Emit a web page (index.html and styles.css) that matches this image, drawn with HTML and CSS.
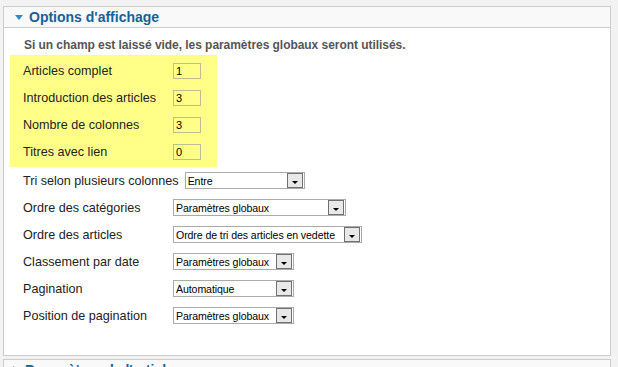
FILE: index.html
```html
<!DOCTYPE html>
<html lang="fr">
<head>
<meta charset="utf-8">
<link rel="stylesheet" href="styles.css">
</head>
<body>
<div class="panel">
  <div class="panel-head"><span class="tri-down"></span><span class="panel-title">Options d'affichage</span></div>
  <div class="panel-body">
    <p class="desc">Si un champ est laissé vide, les paramètres globaux seront utilisés.</p>
    <div class="highlight">
      <div class="row"><label class="lbl">Articles complet</label><span class="inp">1</span></div>
      <div class="row"><label class="lbl">Introduction des articles</label><span class="inp">3</span></div>
      <div class="row"><label class="lbl">Nombre de colonnes</label><span class="inp">3</span></div>
      <div class="row"><label class="lbl">Titres avec lien</label><span class="inp">0</span></div>
    </div>
    <div class="rows">
      <div class="row"><label class="lbl">Tri selon plusieurs colonnes</label><span class="sel w118"><span class="sel-text">Entre</span><span class="sel-btn"></span></span></div>
      <div class="row"><label class="lbl">Ordre des catégories</label><span class="sel w171"><span class="sel-text">Paramètres globaux</span><span class="sel-btn"></span></span></div>
      <div class="row"><label class="lbl">Ordre des articles</label><span class="sel w187"><span class="sel-text">Ordre de tri des articles en vedette</span><span class="sel-btn"></span></span></div>
      <div class="row"><label class="lbl">Classement par date</label><span class="sel w119"><span class="sel-text">Paramètres globaux</span><span class="sel-btn"></span></span></div>
      <div class="row"><label class="lbl">Pagination</label><span class="sel w119"><span class="sel-text">Automatique</span><span class="sel-btn"></span></span></div>
      <div class="row"><label class="lbl">Position de pagination</label><span class="sel w119"><span class="sel-text">Paramètres globaux</span><span class="sel-btn"></span></span></div>
    </div>
  </div>
</div>
<div class="panel panel-closed">
  <div class="panel-head"><span class="tri-right"></span><span class="panel-title">Paramètres de l'article</span></div>
</div>
</body>
</html>
```
FILE: styles.css
```css
html, body {
  margin: 0;
  padding: 0;
}
body {
  background: #f2f2f2;
  font-family: "Liberation Sans", Arial, sans-serif;
  padding: 6px 0 0 3px;
  overflow: hidden;
  height: 367px;
  box-sizing: border-box;
}
.panel {
  width: 606px;
  border: 1px solid #cccccc;
  background: #ffffff;
}
.panel-head {
  height: 20px;
  background: #f9f9f9;
  border-bottom: 1px solid #cccccc;
  display: flex;
  align-items: center;
  padding-left: 11px;
}
.tri-down {
  width: 0;
  height: 0;
  border-left: 4px solid transparent;
  border-right: 4px solid transparent;
  border-top: 5px solid #2a8ac6;
  margin-right: 6px;
  margin-top: 1px;
}
.tri-right {
  width: 0;
  height: 0;
  border-top: 4px solid transparent;
  border-bottom: 4px solid transparent;
  border-left: 5px solid #2a8ac6;
  margin-right: 7px;
  margin-left: -1px;
}
.panel-title {
  font-size: 14px;
  font-weight: bold;
  color: #146396;
}
.panel-body {
  height: 327px;
  padding: 0 6px;
  box-sizing: border-box;
}
.desc {
  margin: 0;
  padding: 10px 0 0 14px;
  height: 27px;
  box-sizing: border-box;
  font-size: 12px;
  font-weight: bold;
  color: #555555;
  letter-spacing: -0.05px;
}
.highlight {
  width: 207px;
  background: #ffff88;
  padding: 2px 0;
}
.row {
  height: 27px;
  display: flex;
  align-items: center;
  padding-left: 13px;
}
.lbl {
  min-width: 144px;
  padding-right: 6px;
  font-size: 12.6px;
  color: #222222;
}
.inp {
  width: 24px;
  height: 14px;
  border: 1px solid #bdbd99;
  background: #ffff88;
  font-size: 11px;
  line-height: 14px;
  padding-left: 2px;
  box-sizing: content-box;
  color: #000;
}
.sel {
  display: flex;
  align-items: center;
  height: 15px;
  border: 1px solid #aaaaaa;
  background: #ffffff;
  padding: 0 1px 0 2px;
  box-sizing: content-box;
}
.w118 { width: 115px; }
.w171 { width: 168px; }
.w187 { width: 184px; }
.w119 { width: 116px; }
.sel-text {
  flex: 1;
  font-size: 10.6px;
  letter-spacing: -0.1px;
  color: #000;
  white-space: nowrap;
  overflow: hidden;
}
.sel-btn {
  position: relative;
  flex: none;
  width: 14px;
  height: 13px;
  border: 1px solid #707070;
  background: #e8e8e8;
}
.sel-btn::after {
  content: "";
  position: absolute;
  left: 4px;
  top: 7px;
  border-left: 3px solid transparent;
  border-right: 3px solid transparent;
  border-top: 3px solid #000;
}
.panel-closed {
  margin-top: 3px;
  background: #f8f8f8;
}
.panel-closed .panel-head {
  border-bottom: none;
  padding-left: 10px;
}
```
